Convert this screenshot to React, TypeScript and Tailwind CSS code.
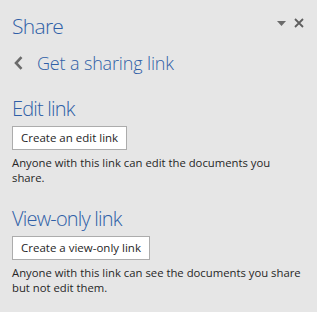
function Section({
  title,
  button,
  text,
}: {
  title: string;
  button: string;
  text: string;
}) {
  return (
    <div>
      <h2 className="text-[20px] leading-[26px] font-light tracking-[-0.8px] text-[#2f5fa7]">{title}</h2>
      <button className="mt-[4px] h-[24px] border border-[#acacac] bg-white px-[8px] text-[11.5px] text-[#262626]">
        {button}
      </button>
      <p className="mt-[5px] max-w-[292px] text-[11.3px] leading-[15px] text-[#262626]">{text}</p>
    </div>
  );
}

export default function App() {
  return (
    <div
      className="h-[312px] w-[317px] bg-[#e6e6e6] pl-[12px] pr-[10px] pt-[12px]"
      style={{ fontFamily: '"Segoe UI", "Open Sans", sans-serif' }}
    >
      <div className="flex items-start justify-between">
        <h1 className="text-[21px] leading-[28px] font-light tracking-[-0.7px] text-[#2f5fa7]">Share</h1>
        <div className="mt-[6px] flex items-center gap-[8px] pr-[3px]">
          <svg width="9" height="5" viewBox="0 0 9 5">
            <path d="M0 0h9L4.5 5z" fill="#6b6b6b" />
          </svg>
          <svg width="10" height="10" viewBox="0 0 10 10">
            <path d="M1 1l8 8M9 1l-8 8" stroke="#5f5f5f" strokeWidth="1.8" />
          </svg>
        </div>
      </div>
      <div className="mt-[11px] flex h-[24px] items-center gap-[14px] pl-[2px]">
        <svg width="9" height="14" viewBox="0 0 9 14">
          <path d="M7.5 1.2L2 7l5.5 5.8" fill="none" stroke="#6b6b6b" strokeWidth="2.6" />
        </svg>
        <span className="text-[18px] leading-[24px] font-light tracking-[-0.15px] text-[#2f5fa7]">
          Get a sharing link
        </span>
      </div>
      <div className="mt-[21px] flex flex-col gap-[21px]">
        <Section
          title="Edit link"
          button="Create an edit link"
          text="Anyone with this link can edit the documents you share."
        />
        <Section
          title="View-only link"
          button="Create a view-only link"
          text="Anyone with this link can see the documents you share but not edit them."
        />
      </div>
    </div>
  );
}
